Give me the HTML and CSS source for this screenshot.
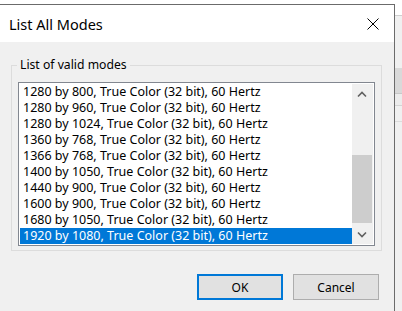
FILE: index.html
```html
<!DOCTYPE html>
<html>
<head>
<meta charset="utf-8">
<link rel="stylesheet" href="styles.css">
</head>
<body>
<div class="screen">
  <div class="stage">
    <div class="dialog">
      <div class="titlebar">
        <span class="title">List All Modes</span>
        <svg class="close" width="12" height="12" viewBox="0 0 12 12"><path d="M0.5 0.5 L11.5 11.5 M11.5 0.5 L0.5 11.5" stroke="#000" stroke-width="1" fill="none"/></svg>
      </div>
      <div class="body">
        <div class="group">
          <div class="group-head">
            <span class="gl-left"></span>
            <span class="legend">List of valid modes</span>
            <span class="gl-right"></span>
          </div>
          <div class="group-body">
            <div class="listbox">
              <div class="rows">
                <div class="row">1280 by 800, True Color (32 bit), 60 Hertz</div>
                <div class="row">1280 by 960, True Color (32 bit), 60 Hertz</div>
                <div class="row">1280 by 1024, True Color (32 bit), 60 Hertz</div>
                <div class="row">1360 by 768, True Color (32 bit), 60 Hertz</div>
                <div class="row">1366 by 768, True Color (32 bit), 60 Hertz</div>
                <div class="row">1400 by 1050, True Color (32 bit), 60 Hertz</div>
                <div class="row">1440 by 900, True Color (32 bit), 60 Hertz</div>
                <div class="row">1600 by 900, True Color (32 bit), 60 Hertz</div>
                <div class="row">1680 by 1050, True Color (32 bit), 60 Hertz</div>
                <div class="row selected">1920 by 1080, True Color (32 bit), 60 Hertz</div>
              </div>
              <div class="scrollbar">
                <div class="sb-btn"><svg width="10" height="7" viewBox="0 0 10 7"><path d="M1 5.5 L5 1.5 L9 5.5" stroke="#606060" stroke-width="1.6" fill="none"/></svg></div>
                <div class="track">
                  <div class="thumb"></div>
                </div>
                <div class="sb-btn"><svg width="10" height="7" viewBox="0 0 10 7"><path d="M1 1.5 L5 5.5 L9 1.5" stroke="#606060" stroke-width="1.6" fill="none"/></svg></div>
              </div>
            </div>
          </div>
        </div>
        <div class="buttons">
          <button class="btn default">OK</button>
          <button class="btn">Cancel</button>
        </div>
      </div>
    </div>
  </div>
  <div class="backdrop"></div>
</div>
</body>
</html>
```

FILE: styles.css
```css
* { box-sizing: border-box; }
html, body { margin: 0; padding: 0; }
body {
  background: #ffffff;
  font-family: "Noto Sans", "Open Sans", sans-serif;
  font-size: 12px;
  color: #000;
  width: 402px;
  height: 311px;
  overflow: hidden;
}
.screen {
  display: flex;
  height: 311px;
}
.stage {
  width: 395px;
  padding-top: 4px;
}
.dialog {
  width: 395px;
  height: 307px;
  border-top: 1px solid #6b6b6b;
  border-right: 1px solid #6b6b6b;
  background: #f0f0f0;
  display: flex;
  flex-direction: column;
}
.titlebar {
  height: 37px;
  background: #ffffff;
  display: flex;
  align-items: center;
  justify-content: space-between;
  padding: 0 15px 0 9px;
}
.title {
  font-size: 14.5px;
  line-height: 20px;
}
.close { display: block; }
.body {
  display: flex;
  flex-direction: column;
}
.group {
  margin: 15px 12px 0 11px;
}
.group-head {
  display: flex;
  height: 16px;
}
.gl-left {
  align-self: flex-end;
  width: 6px;
  height: 8px;
  border-top: 1px solid #dcdcdc;
  border-left: 1px solid #dcdcdc;
}
.gl-right {
  align-self: flex-end;
  flex: 1;
  height: 8px;
  border-top: 1px solid #dcdcdc;
  border-right: 1px solid #dcdcdc;
}
.legend {
  padding: 0 3px;
  line-height: 16px;
  font-size: 12.2px;
  white-space: nowrap;
}
.group-body {
  border: 1px solid #dcdcdc;
  border-top: none;
  padding: 9px 6px 4px 6px;
}
.listbox {
  border: 1px solid #828790;
  background: #ffffff;
  padding: 1px;
  display: flex;
}
.rows {
  width: 333px;
  font-size: 12.5px;
}
.row {
  height: 16px;
  line-height: 16px;
  padding-left: 3px;
  white-space: nowrap;
  overflow: hidden;
}
.row.selected {
  background: #0078d7;
  color: #ffffff;
}
.scrollbar {
  width: 21px;
  background: #f0f0f0;
  display: flex;
  flex-direction: column;
  padding-right: 1px;
}
.sb-btn {
  height: 20px;
  display: flex;
  align-items: center;
  justify-content: center;
}
.track {
  flex: 1;
  display: flex;
  flex-direction: column;
  justify-content: flex-end;
}
.thumb {
  height: 68px;
  background: #cdcdcd;
  margin-bottom: 1px;
}
.buttons {
  display: flex;
  justify-content: flex-end;
  gap: 10px;
  padding-right: 15px;
  margin-top: 23px;
}
.btn {
  width: 86px;
  height: 26px;
  background: #e1e1e1;
  border: 1px solid #adadad;
  font-family: "Noto Sans", "Open Sans", sans-serif;
  font-size: 12px;
  color: #000;
  padding: 0;
  margin: 0;
}
.btn.default {
  border: 2px solid #0078d7;
}
.backdrop {
  width: 7px;
  height: 311px;
  background: linear-gradient(to bottom,
    #ffffff 0, #ffffff 15px,
    #cfcfcf 15px, #cfcfcf 16px,
    #f0f0f0 16px, #f0f0f0 68px,
    #d9d9d9 68px, #d9d9d9 93px,
    #c8c8c8 93px, #c8c8c8 94px,
    #ececec 94px, #ececec 105px,
    #d4d4d4 105px, #d4d4d4 106px,
    #f0f0f0 106px, #f0f0f0 121px,
    #dcdcdc 121px, #dcdcdc 122px,
    #f0f0f0 122px);
}
```
